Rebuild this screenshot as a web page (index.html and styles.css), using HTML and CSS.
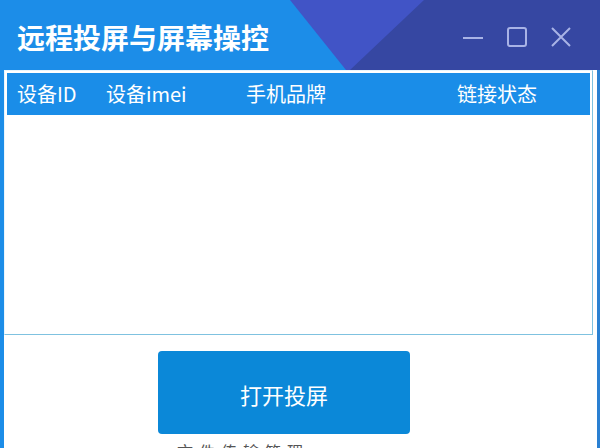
FILE: index.html
```html
<!DOCTYPE html>
<html lang="zh-CN">
<head>
<meta charset="utf-8">
<title>远程投屏与屏幕操控</title>
<link rel="stylesheet" href="styles.css">
</head>
<body>
<div class="window">
  <div class="titlebar">
    <svg class="deco" width="600" height="70" viewBox="0 0 600 70">
      <polygon points="290,0 600,0 600,70 346,70" fill="#4154c6"/>
      <polygon points="424,0 600,0 600,70 350,70" fill="#3647a2"/>
    </svg>
    <div class="title">远程投屏与屏幕操控</div>
    <div class="controls">
      <svg class="ctl" width="22" height="22" viewBox="0 0 22 22"><line x1="1" y1="12" x2="21" y2="12" stroke="#a9b3e6" stroke-width="2"/></svg>
      <svg class="ctl" width="22" height="22" viewBox="0 0 22 22"><rect x="2" y="2" width="18" height="18" rx="2" fill="none" stroke="#a9b3e6" stroke-width="2"/></svg>
      <svg class="ctl" width="22" height="22" viewBox="0 0 22 22"><path d="M2 2 L20 20 M20 2 L2 20" stroke="#a9b3e6" stroke-width="2" fill="none"/></svg>
    </div>
  </div>
  <div class="content">
    <div class="list">
      <div class="list-head">
        <span>设备ID</span>
        <span>设备imei</span>
        <span>手机品牌</span>
        <span>链接状态</span>
      </div>
      <div class="list-body"></div>
    </div>
    <div class="actions">
      <button class="primary">打开投屏</button>
      <div class="sub">文件传输管理</div>
    </div>
  </div>
</div>
</body>
</html>
```

FILE: styles.css
```css
* { box-sizing: border-box; }
html, body {
  margin: 0;
  padding: 0;
  width: 600px;
  height: 448px;
  overflow: hidden;
  background: #ffffff;
  font-family: "Noto Sans CJK SC", "Microsoft YaHei", sans-serif;
}
.window {
  width: 600px;
  height: 448px;
  display: flex;
  flex-direction: column;
  background: #1c8de8;
}
.titlebar {
  position: relative;
  height: 70px;
  flex: none;
  display: flex;
  align-items: center;
  justify-content: space-between;
  padding-top: 4px;
  background: #1c8de8;
}
.deco {
  position: absolute;
  left: 0;
  top: 0;
}
.title {
  position: relative;
  padding-left: 17px;
  color: #ffffff;
  font-size: 28px;
  font-weight: 700;
  line-height: 1;
}
.controls {
  position: relative;
  display: flex;
  gap: 22px;
  padding-right: 28px;
}
.ctl { display: block; }
.content {
  flex: 1;
  display: flex;
  flex-direction: column;
  background: #ffffff;
  border-left: 4px solid #1c8de8;
  border-right: 3px solid #2a80d2;
  padding-right: 4px;
  min-height: 0;
}
.list {
  height: 265px;
  flex: none;
  border: 1px solid #7fc2e0;
  border-top-color: #e8f5fd;
  border-left-color: #e8f5fd;
  padding: 2px;
  display: flex;
  flex-direction: column;
  background: #ffffff;
}
.list-head {
  height: 42px;
  flex: none;
  background: #1a8de8;
  color: #ffffff;
  font-size: 20px;
  display: grid;
  grid-template-columns: 89px 140px 211px 1fr;
  align-items: center;
  padding-left: 10px;
  line-height: 1;
}
.list-body {
  flex: 1;
  background: #ffffff;
}
.actions {
  display: flex;
  flex-direction: column;
  align-items: flex-start;
  padding-left: 154px;
  padding-top: 16px;
}
.primary {
  width: 252px;
  height: 83px;
  border: none;
  border-radius: 4px;
  background: #0b88d8;
  color: #ffffff;
  font-family: "Noto Sans CJK SC", "Microsoft YaHei", sans-serif;
  font-size: 22px;
  padding: 0;
  padding-top: 2px;
}
.sub {
  margin-top: 9px;
  margin-left: 19px;
  font-size: 16px;
  color: #555555;
  letter-spacing: 6px;
  line-height: 1;
}
```
